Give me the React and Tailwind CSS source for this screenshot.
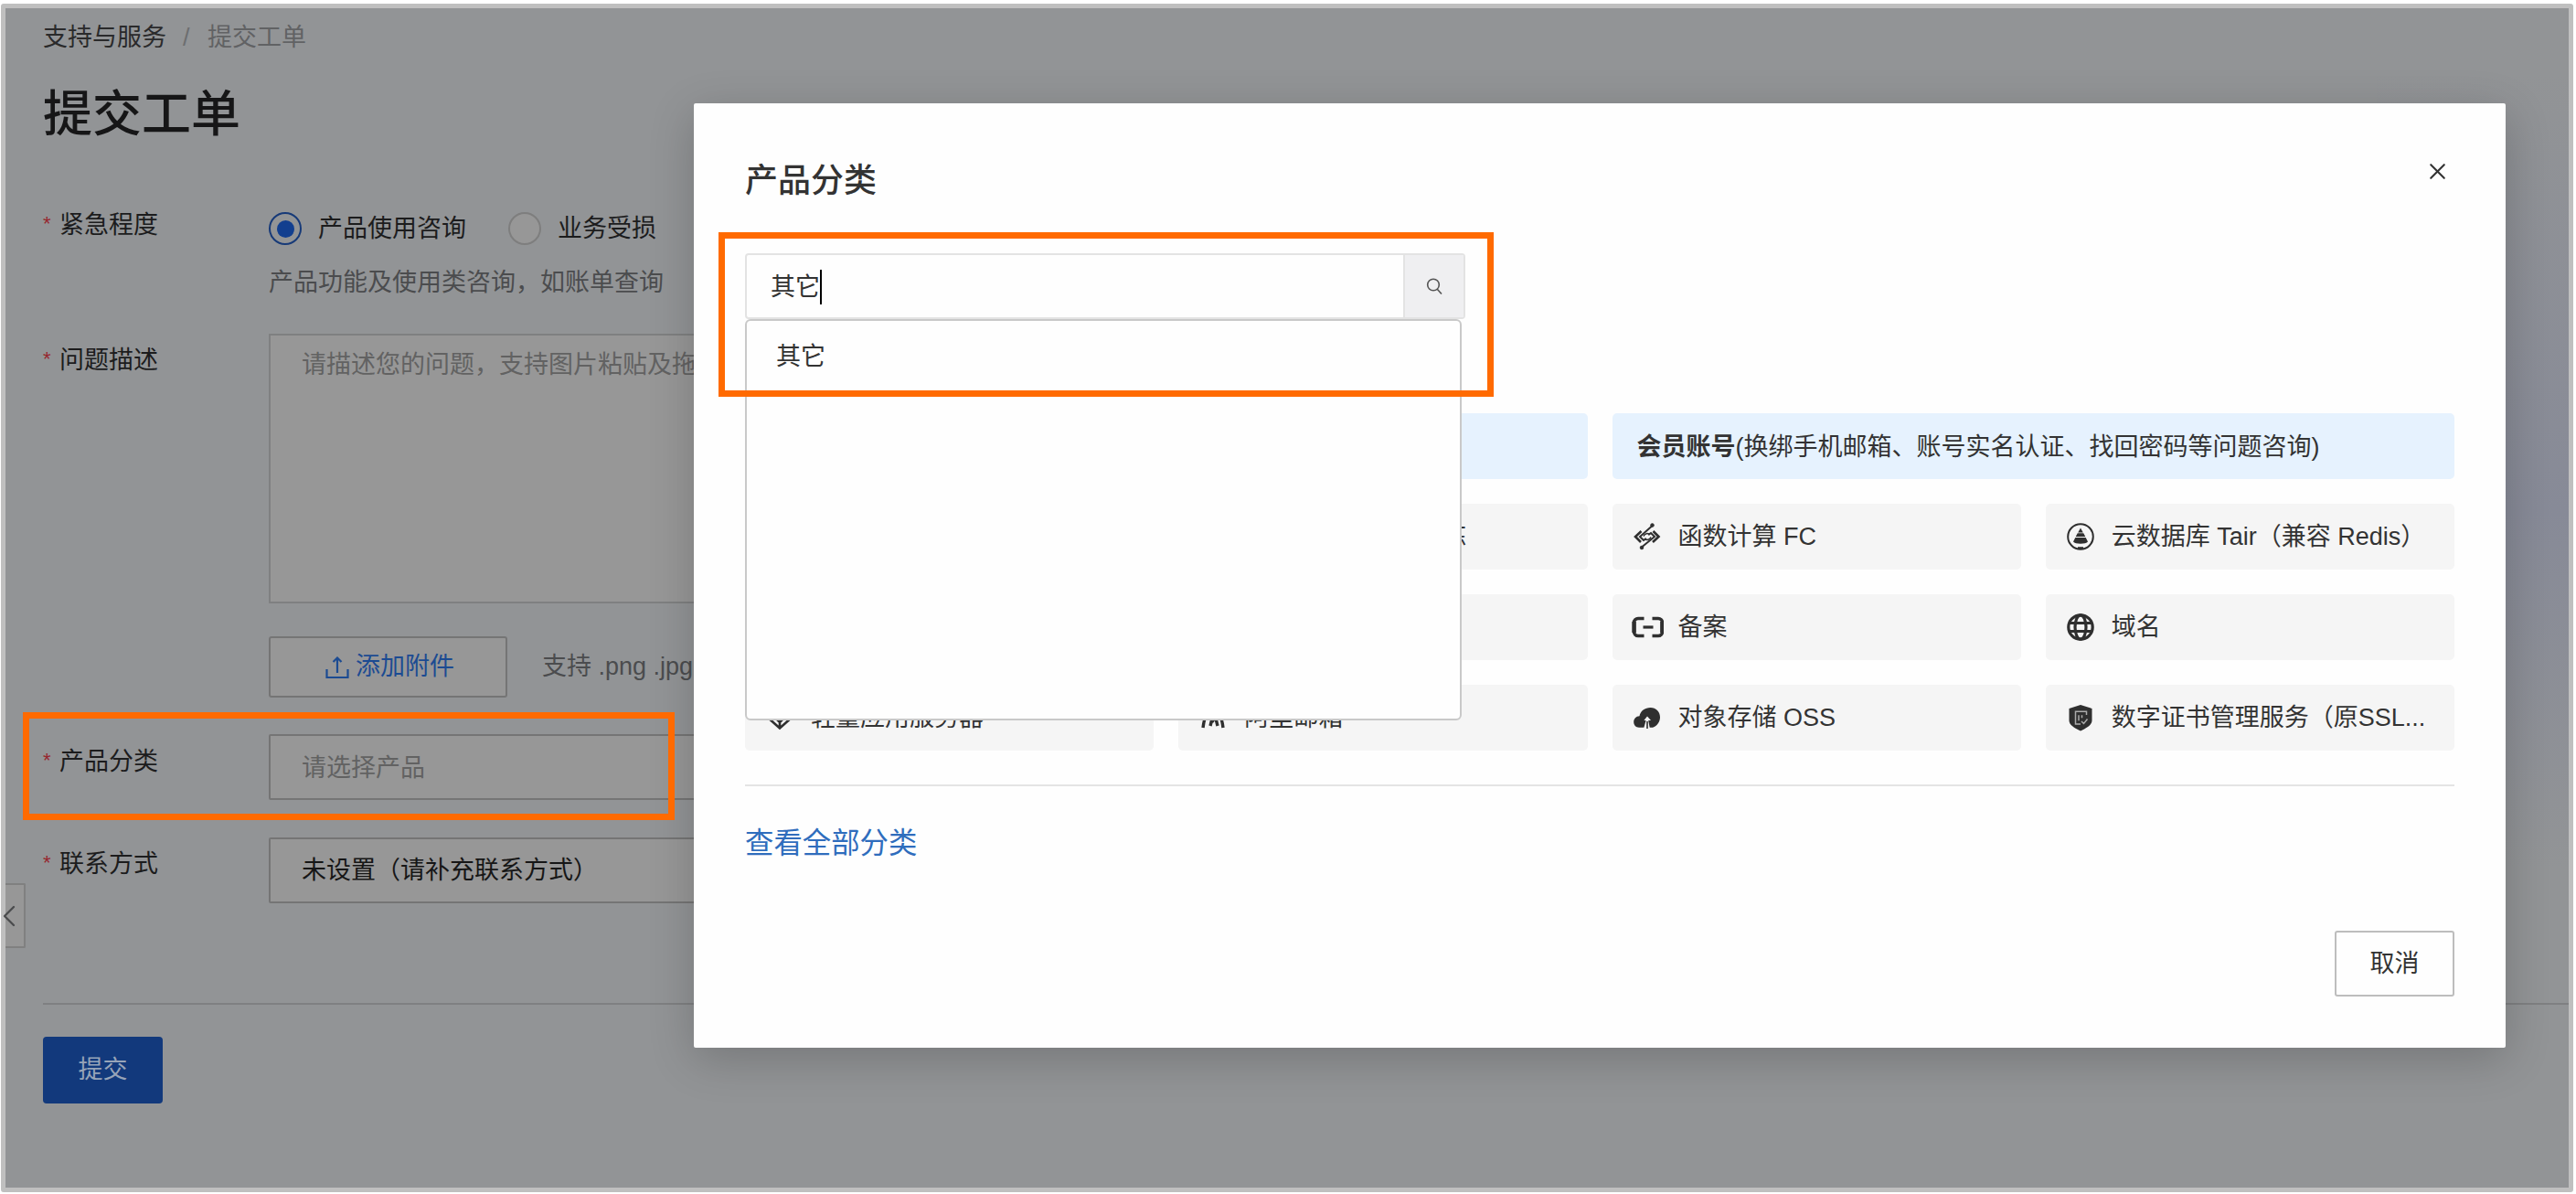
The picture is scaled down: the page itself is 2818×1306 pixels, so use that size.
import React from 'react';
import { ChevronLeft, X } from 'lucide-react';

const ENTRIES = [
  { label: '云服务器 ECS', icon: null },
  { label: '大模型服务平台百炼', icon: null },
  { label: '函数计算 FC', icon: 'function' },
  { label: '云数据库 Tair（兼容 Redis）', icon: 'tair' },
  { label: '云数据库 RDS', icon: null },
  { label: '短信服务', icon: null },
  { label: '备案', icon: 'bracket' },
  { label: '域名', icon: 'globe' },
  { label: '轻量应用服务器', icon: 'diamond' },
  { label: '阿里邮箱', icon: 'mail' },
  { label: '对象存储 OSS', icon: 'cloud' },
  { label: '数字证书管理服务（原SSL...', icon: 'shield' },
];

const ICONS = {
  function: (
    <g fill="none" stroke="currentColor" strokeWidth="2.2">
      <circle cx="23.5" cy="5.5" r="1.8" fill="currentColor" strokeWidth="1" />
      <circle cx="12" cy="30" r="1.8" fill="currentColor" strokeWidth="1" />
      <path d="M11.500 12 5 18l6 6M24.500 12l6 6-6.500 6" strokeWidth="2.6" />
      <path d="M23 6.500 10 18l4 4 3-2M12.500 29 26 18l-4-4-3 2" strokeWidth="2" />
      <path d="M14 17.500c1-3 5-4 7-1.500M22 18.500c-1 3-5 4-7 1.500" strokeWidth="1.600" />
    </g>
  ),
  tair: (
    <g>
      <circle cx="18" cy="18" r="13.8" fill="none" stroke="currentColor" strokeWidth="2" />
      <path d="M18 8.500 20.800 13.500h-5.600zM14.700 14.300h6.600l2 3.800H12.700zM12.300 19h11.400l2.300 4.500c-2 3-14 3-16 0z" fill="currentColor" />
      <path d="M15 30.500h6" stroke="currentColor" strokeWidth="2.600" />
    </g>
  ),
  bracket: (
    <g fill="none" stroke="currentColor">
      <path d="M14.500 8.500H8a4.500 4.500 0 0 0-4.500 4.500v10A4.500 4.500 0 0 0 8 27.500h6.500" strokeWidth="3.6" />
      <path d="M23.500 8.500H30a4.500 4.500 0 0 1 4.500 4.500v10a4.500 4.500 0 0 1-4.500 4.500h-6.500" strokeWidth="3.6" />
      <path d="M3.600 12v12M34.400 12v12" strokeWidth="4.400" />
      <path d="M13.500 18h11" strokeWidth="3.200" />
    </g>
  ),
  globe: (
    <g fill="none" stroke="currentColor" strokeWidth="3.2">
      <circle cx="18" cy="18" r="13.2" />
      <ellipse cx="18" cy="18" rx="6" ry="13.2" />
      <path d="M5 13.500h26M5 22.500h26" />
    </g>
  ),
  diamond: (
    <path d="M4 17 18 29.500 32 17M12 17l6 6 6-6M18 12v16" fill="none" stroke="currentColor" strokeWidth="2.600" />
  ),
  mail: (
    <path d="M7 29c1-8 2-12 5-17l6 9 6-9c3 5 4 9 5 17M15 27l2-8M23 27l-2-8" fill="none" stroke="currentColor" strokeWidth="3.400" />
  ),
  cloud: (
    <g>
      <path d="M21.500 7c6 0 10.500 4.500 10.500 10.500 0 5-3 9.500-8 11.300H9c-3.500 0-5.800-2.800-5.800-6 0-3.500 2.500-6.300 6.300-6.500C10.500 10.500 15.500 7 21.500 7z" fill="currentColor" />
      <path d="m18 16.500-3.600 4.500h2.200l-2.400 8.500h6.600l-1.600-8.500H22z" fill="#f5f5f5" />
      <path d="M18 22v8" stroke="currentColor" strokeWidth="1.600" />
    </g>
  ),
  shield: (
    <g>
      <path d="M18 4 30.500 8v13c0 5-5.500 8-12.500 11.500C11 29 5.500 26 5.500 21V8z" fill="currentColor" />
      <path d="M24.500 15v-3.800H12.500V25H18M16 15.200v6M19.500 15.200v3M19 22l2.500 2.500 4-5" fill="none" stroke="#aaa" strokeWidth="1.500" />
    </g>
  ),
};

function FormLabel({ children }) {
  return (
    <div className="flex w-[247px] shrink-0 items-start leading-10">
      <span className="w-[18px] shrink-0 text-[22px] leading-[38px] text-[#97262f]">*</span>
      <span className="text-[#1c1c1d]">{children}</span>
    </div>
  );
}

function Entry({ label, icon }) {
  return (
    <div className="flex h-18 items-center rounded-[5px] bg-[#f5f5f5] pl-5 text-[#333]">
      <svg viewBox="0 0 36 36" className="mr-4 size-9 shrink-0 text-[#2f2f2f]">{icon && ICONS[icon]}</svg>
      <span className="pt-px whitespace-nowrap">{label}</span>
    </div>
  );
}

function TicketForm() {
  return (
    <div className="flex h-full flex-col overflow-hidden pl-[41px]">
      <div className="mt-[12px] flex h-10 items-center text-[#2a2a2b]">
        <span>支持与服务</span>
        <span className="mx-[18px] w-[9px] text-[#6d6e70]">/</span>
        <span className="text-[#616264]">提交工单</span>
      </div>
      <h1 className="mt-[24px] h-20 text-[54px] leading-20 font-medium text-[#161617]">提交工单</h1>

      <div className="mt-[60px] flex h-[140px]">
        <div className="pt-px">
          <FormLabel>紧急程度</FormLabel>
        </div>
        <div className="pt-[5px] text-[#1c1c1d]">
          <div className="flex h-10 items-center">
            <span className="mr-[18px] flex size-9 items-center justify-center rounded-full border-2 border-[#173a78]">
              <span className="size-[19px] rounded-full bg-[#123f8f]" />
            </span>
            <span>产品使用咨询</span>
            <span className="mr-[18px] ml-[46px] size-9 rounded-full border-2 border-[#7e7e7e] bg-[#979797]" />
            <span>业务受损</span>
          </div>
          <p className="mt-[19px] leading-10 text-[#4b4c4e]">产品功能及使用类咨询，如账单查询</p>
        </div>
      </div>

      <div className="flex h-[331px]">
        <div className="pt-[9px]">
          <FormLabel>问题描述</FormLabel>
        </div>
        <div className="h-[295px] w-[1700px] border-2 border-[#7f8081] bg-[#979797] px-[34px] pt-[12px] leading-10 text-[#626262]">
          请描述您的问题，支持图片粘贴及拖拽
        </div>
      </div>

      <div className="flex h-[107px] pl-[247px]">
        <button className="flex h-[67px] w-[261px] items-center justify-center gap-[7px] rounded-[3px] border-2 border-[#757575] bg-[#979797] pl-[4px] text-[#1c4b92]">
          <svg viewBox="0 0 26 26" className="size-[26px]" fill="none" stroke="currentColor" strokeWidth="2.200">
            <path d="M1.500 15v9h23v-9M13 19V3M8.500 7 13 2.500 17.500 7" />
          </svg>
          添加附件
        </button>
        <span className="ml-[38px] leading-[67px] text-[#4b4c4e]">支持 .png .jpg .jpeg</span>
      </div>

      <div className="flex h-[113px]">
        <div className="pt-[10px]">
          <FormLabel>产品分类</FormLabel>
        </div>
        <div className="h-[72px] w-[1700px] rounded-[2px] border-2 border-[#757575] bg-[#979797] px-[34px] leading-[71px] text-[#626262]">请选择产品</div>
      </div>

      <div className="flex h-[181px]">
        <div className="pt-[9px]">
          <FormLabel>联系方式</FormLabel>
        </div>
        <div className="h-[72px] w-[1700px] rounded-[2px] border-2 border-[#757575] bg-[#979797] px-[34px] leading-[68px] text-[#161616]">未设置（请补充联系方式）</div>
      </div>

      <div className="border-t-2 border-[#7f8082] pt-[35px]">
        <button className="h-[73px] w-[131px] rounded-[4px] bg-[#12397c] text-[#97a4b8]">提交</button>
      </div>
    </div>
  );
}

function CategoryDialog() {
  return (
    <div className="absolute top-[113px] left-[759px] h-[1033px] w-[1982px] rounded-[2px] bg-[#fefefe] px-[56px] text-[#333] shadow-[0_12px_50px_rgba(0,0,0,0.2)]">
      <div className="flex h-[164px] items-start justify-between pt-[55px]">
        <h2 className="text-[36px] leading-[60px] font-medium text-[#333]">产品分类</h2>
        <X className="mt-[5px] mr-[4px] size-[29px]" strokeWidth={1.8} />
      </div>

      <div className="relative">
        <div className="flex h-[72px] w-[788px] rounded-[4px] border-2 border-[#e3e3e3]">
          <div className="flex flex-1 items-center pl-[26px]">
            <span className="pt-[3px]">其它</span>
            <span className="mt-[2px] h-[38px] w-[2px] bg-black" />
          </div>
          <div className="flex w-[66px] items-center justify-center border-l-2 border-[#e3e3e3] bg-[#efeff1]">
            <svg viewBox="0 0 18 18" className="size-[18px]" fill="none" stroke="#555" strokeWidth="1.600">
              <circle cx="8" cy="7.500" r="6.300" />
              <path d="m12 12 5 5.500" />
            </svg>
          </div>
        </div>
        <div className="absolute top-[72px] left-0 z-10 h-[439px] w-[784px] rounded-[6px] border-2 border-[#c9c9c9] bg-[#fefefe] pt-[19px] pl-[32px] leading-10">
          其它
        </div>
      </div>

      <div className="mt-[103px] grid grid-cols-2 gap-[27px]">
        <div className="h-18 rounded-[5px] bg-[#e6f2fe]" />
        <div className="h-18 rounded-[5px] bg-[#e6f2fe] pl-[27px] leading-[74px]">
          <b className="font-bold">会员账号</b>(换绑手机邮箱、账号实名认证、找回密码等问题咨询)
        </div>
      </div>
      <div className="mt-[27px] grid grid-cols-4 gap-[27px]">
        {ENTRIES.map((entry) => (
          <Entry key={entry.label} {...entry} />
        ))}
      </div>

      <div className="mt-[37px] border-t-2 border-[#e4e4e4] pt-[33px] text-[31.400px] leading-[60px] text-[#2f6dbd]">查看全部分类</div>
      <div className="mt-[65px] flex justify-end">
        <button className="h-[72px] w-[131px] rounded-[3px] border-2 border-[#bdbdbd]">取消</button>
      </div>
    </div>
  );
}

export default function App() {
  return (
    <div className="relative h-[1306px] w-[2818px] overflow-hidden bg-white pt-1 pl-px font-['Liberation_Sans','Noto_Sans_CJK_SC',sans-serif] text-[27px]">
      <div className="h-[1300px] w-[2814px] rounded-[3px] border-5 border-[#bfbfbf] bg-[#929496]">
        <TicketForm />
      </div>

      {/* tinted backdrop strip beside the dialog */}
      <div className="absolute top-[80px] left-[2600px] h-[870px] w-[210px] bg-linear-to-b from-[#8a8b9600] via-[#878a97] via-55% to-[#868d9a00]" />
      <div className="absolute top-[966px] left-[6px] flex h-[71px] w-[22px] items-center rounded-r-[2px] border-2 border-l-0 border-[#808080] bg-[#979797] text-[#4b4c4e]">
        <ChevronLeft className="-ml-[16px] size-10 shrink-0" strokeWidth={1.4} />
      </div>

      <CategoryDialog />

      <div className="absolute top-[779px] left-[25px] h-[118px] w-[713px] border-7 border-[#ff6a00]" />
      <div className="absolute top-[254px] left-[786px] z-20 h-[180px] w-[848px] border-7 border-[#ff6a00]" />
    </div>
  );
}
